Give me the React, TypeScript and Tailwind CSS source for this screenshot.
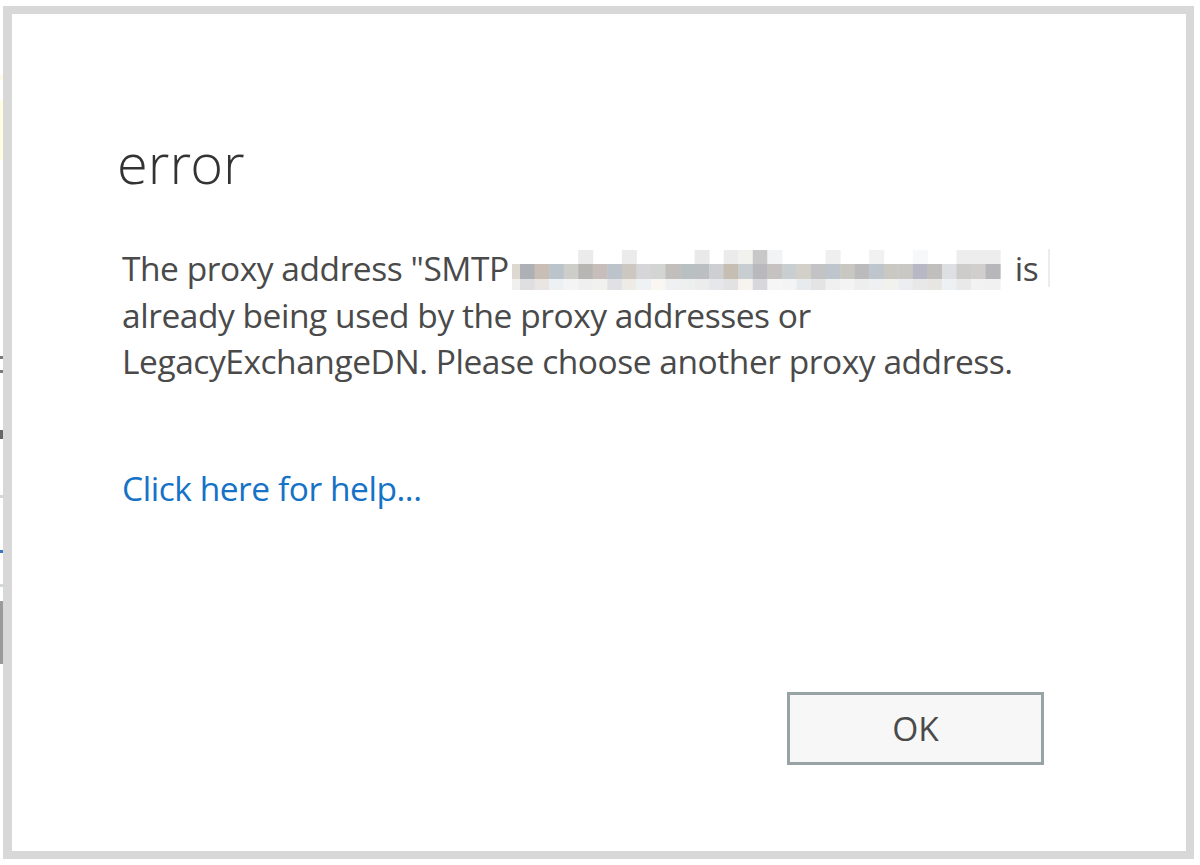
import React from "react";

const mid = [
  "#adb1b6", "#c8beb5", "#bcc4cb", "#cdcdca", "#b8b6b2", "#c7bebc", "#bcc3ca", "#cdc7c2",
  "#d6d6d8", "#d3d5d3", "#c2bebb", "#b9c0c2", "#bcbfc2", "#cdcfd1", "#c6bdb3", "#c7cdd0",
  "#b8b8bd", "#c6c2c2", "#c9ced1", "#d3d0c9", "#c3c2c4", "#bec5cd", "#c8c7c2", "#bbbbbe",
  "#bec5cc", "#c9c8c2", "#c9c8c4", "#b7b8c6", "#c0bfbd", "#dedfe3", "#cdccca", "#d0cfcd",
  "#b6b6bb",
];
const bot = [
  "#dfdfe2", "#e9e5e2", "#eef1f4", "#f4f4f4", "#efeff0", "#f1f2ee", "#e1e0e4", "#eeeae6",
  "#eef2f5", "#faf7f3", "#eef0f2", "#eef0f0", "#ececec", "#e6e7ea", "#e2e2e2", "#f7f4ef",
  "#d8d8dc", "#f6f6f6", "#f4f4f4", "#e8ebee", "#e4e4e4", "#f0f0f0", "#f3f4f3", "#eeeeee",
  "#eff0f2", "#f1f1ee", "#ebedf0", "#e8e8e8", "#e7e6e3", "#eef1f3", "#e9e9e9", "#f2f2f2",
  "#f1f1f1",
];
const top: Record<number, string> = {
  4: "#ebebeb", 7: "#ebebeb", 12: "#e9e9e9", 14: "#ebebeb", 15: "#f1f1ee", 16: "#c8c8c8",
  17: "#f2f3f5", 21: "#efefef", 24: "#f1f1f1", 27: "#f6f8fa", 30: "#ededed", 31: "#ededed", 32: "#ededed",
};

function Redacted() {
  const w = 14.55;
  return (
    <svg width="491" height="40" viewBox="0 0 491 40" className="inline-block align-baseline -mb-[9px]">
      <rect x="0" y="14" width="8" height="15" fill="#ddd8d0" />
      <rect x="0" y="29" width="8" height="11" fill="#f0f0ee" />
      {mid.map((c, i) => {
        const x = 8 + i * w;
        const ww = Math.min(w + 0.5, 491 - x);
        return (
          <g key={i}>
            {top[i] ? <rect x={x} y="0" width={ww} height="14" fill={top[i]} /> : null}
            <rect x={x} y="14" width={ww} height="15" fill={c} />
            <rect x={x} y="29" width={ww} height="11" fill={bot[i]} />
          </g>
        );
      })}
    </svg>
  );
}

export default function App() {
  return (
    <div className="w-[1200px] h-[865px] bg-white flex overflow-hidden" style={{ fontFamily: '"Open Sans", "Noto Sans", sans-serif' }}>
      <div className="w-[3px] flex flex-col shrink-0">
        <div className="h-[75px]" />
        <div className="h-[5px] bg-[#fffbe6]" />
        <div className="h-[20px]" />
        <div className="h-[60px] bg-[#fffde2]" />
        <div className="h-[196px]" />
        <div className="h-[3px] bg-[#7a7a7a]" />
        <div className="h-[11px]" />
        <div className="h-[3px] bg-[#7a7a7a]" />
        <div className="h-[57px]" />
        <div className="h-[9px] bg-[#666]" />
        <div className="h-[56px]" />
        <div className="h-[3px] bg-[#d0d8dc]" />
        <div className="h-[52px]" />
        <div className="h-[3px] bg-[#3b78c0]" />
        <div className="h-[31px]" />
        <div className="h-[3px] bg-[#d0d8dc]" />
        <div className="h-[14px]" />
        <div className="h-[63px] bg-[#9a9a9a]" />
      </div>
      <div className="mt-[6px] w-[1191px] h-[853px] shrink-0 bg-white border-[#d8d8d8] border-l-[9px] border-t-[8px] border-r-[8px] border-b-[8px] flex flex-col pl-[110px]">
        <div
          className="mt-[120px] -ml-[5px] text-[56px] leading-[56px] font-light text-[#333]"
          style={{ fontFamily: '"Open Sans Light", "Noto Sans Light", "Noto Sans", "Open Sans", sans-serif' }}
        >
          error
        </div>
        <div className="mt-[55px] text-[33.5px] leading-[46.5px] tracking-[-0.45px] text-[#4a4a4a]">
          <div className="whitespace-nowrap flex items-baseline">
            <span>The proxy address "SMTP</span>
            <span className="ml-[3px]"><Redacted /></span>
            <span className="ml-[12px]">is</span>
            <span className="ml-[10px] w-[2px] h-[38px] bg-[#ececec] self-center" />
          </div>
          <div className="whitespace-nowrap">already being used by the proxy addresses or</div>
          <div className="whitespace-nowrap">LegacyExchangeDN. Please choose another proxy address.</div>
        </div>
        <div className="mt-[80px] text-[33.5px] leading-[46.5px] tracking-[-0.45px] text-[#1672c6]">Click here for help...</div>
        <div className="mt-[181px] self-end mr-[142px] w-[257px] h-[73px] border-[3px] border-[#98a3a6] bg-[#f7f7f7] flex items-center justify-center text-[33.5px] text-[#4a4a4a]">
          OK
        </div>
      </div>
    </div>
  );
}
